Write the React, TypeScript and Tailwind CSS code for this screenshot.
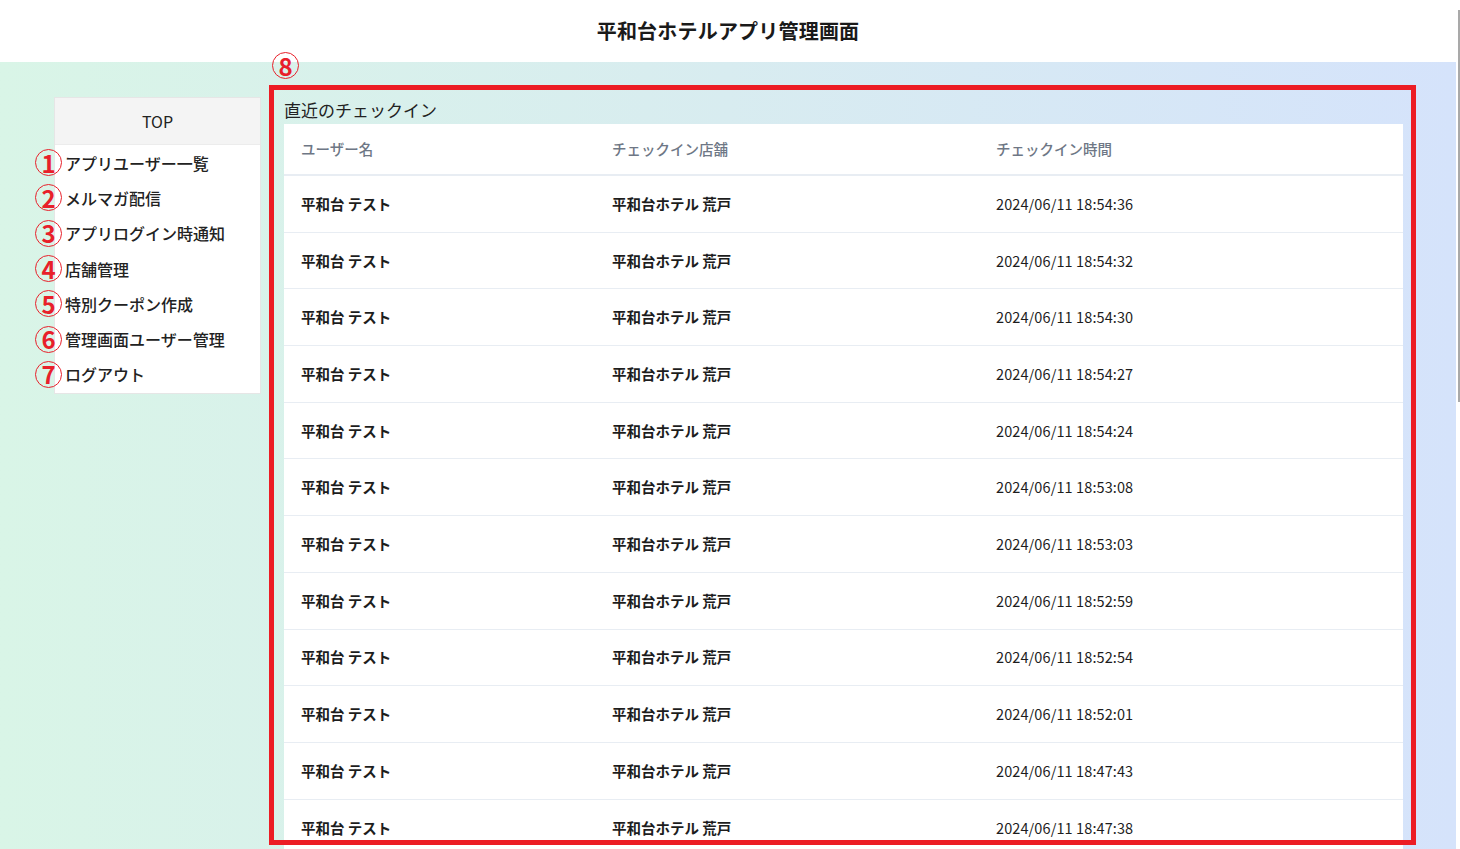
const font = { fontFamily: '"Noto Sans CJK JP", "Noto Sans", sans-serif' };

const menu = [
  "アプリユーザー一覧",
  "メルマガ配信",
  "アプリログイン時通知",
  "店舗管理",
  "特別クーポン作成",
  "管理画面ユーザー管理",
  "ログアウト",
];

const times = [
  "2024/06/11 18:54:36",
  "2024/06/11 18:54:32",
  "2024/06/11 18:54:30",
  "2024/06/11 18:54:27",
  "2024/06/11 18:54:24",
  "2024/06/11 18:53:08",
  "2024/06/11 18:53:03",
  "2024/06/11 18:52:59",
  "2024/06/11 18:52:54",
  "2024/06/11 18:52:01",
  "2024/06/11 18:47:43",
  "2024/06/11 18:47:38",
];

function Badge({ n, className = "" }: { n: number; className?: string }) {
  return (
    <span
      className={`flex items-center justify-center w-[27px] h-[27px] shrink-0 rounded-full border-[1.5px] border-[#e8202a] text-[#e8202a] text-[24px] font-bold leading-none ${className}`}
    >
      {n}
    </span>
  );
}

function Sidebar() {
  return (
    <div className="w-[207px] shrink-0 self-start bg-white border border-[#e6e6e6]">
      <div className="h-[47px] flex items-center justify-center bg-[#f4f4f4] border-b border-[#ececec] text-[16px] text-[#222]">
        TOP
      </div>
      <ul className="pb-[1px]">
        {menu.map((label, i) => (
          <li key={label} className="h-[35.3px] flex items-center">
            <Badge n={i + 1} className="ml-[-20px]" />
            <span className="ml-[3px] text-[16px] font-medium text-[#222] whitespace-nowrap">{label}</span>
          </li>
        ))}
      </ul>
    </div>
  );
}

function CheckinTable() {
  return (
    <div className="bg-white h-full">
      <div className="grid grid-cols-[311px_384px_1fr] pl-[17px] h-[52px] items-center border-b-2 border-[#e8edf3] text-[14.5px] font-medium text-[#6e7785]">
        <span>ユーザー名</span>
        <span>チェックイン店舗</span>
        <span>チェックイン時間</span>
      </div>
      {times.map((t) => (
        <div
          key={t}
          className="grid grid-cols-[311px_384px_1fr] pl-[17px] h-[56.7px] items-center border-b border-[#e8edf3] text-[14.5px] text-[#1d1d1d]"
        >
          <span className="font-bold">平和台 テスト</span>
          <span className="font-bold">平和台ホテル 荒戸</span>
          <span className="tracking-[0.1px]">{t}</span>
        </div>
      ))}
    </div>
  );
}

export default function App() {
  return (
    <div className="h-screen w-full overflow-hidden flex bg-white" style={font}>
      <div className="flex-1 flex flex-col min-w-0">
        <header className="h-[62px] shrink-0 flex items-center justify-center bg-white">
          <h1 className="text-[20px] font-bold text-[#1a1a1a] tracking-[0.2px]">平和台ホテルアプリ管理画面</h1>
        </header>
        <div className="flex-1 flex bg-gradient-to-r from-[#d9f5e7] via-[#d8ecf0] to-[#d5e3fb] pl-[54px] min-h-0">
          <div className="pt-[35px]">
            <Sidebar />
          </div>
          <main className="relative ml-[23px] w-[1119px] shrink-0 flex flex-col">
            <h2 className="pt-[35px] h-[62px] leading-[26px] text-[17px] text-[#222] shrink-0">直近のチェックイン</h2>
            <div className="flex-1 min-h-0">
              <CheckinTable />
            </div>
            <div className="pointer-events-none absolute left-[-15px] top-[23px] w-[1147px] h-[760px] border-[5px] border-[#ec1c24]" />
            <Badge n={8} className="absolute left-[-12px] top-[-10px]" />
          </main>
        </div>
      </div>
      <div className="w-[4px] shrink-0 bg-white pt-[10px]">
        <div className="ml-[2px] w-[2px] h-[392px] bg-[#a9a9a9]" />
      </div>
    </div>
  );
}
